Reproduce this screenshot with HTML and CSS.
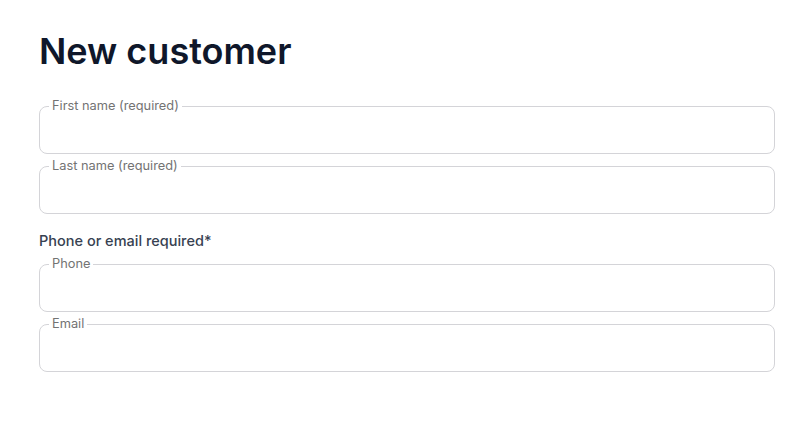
FILE: index.html
```html
<!DOCTYPE html>
<html lang="en">
<head>
<meta charset="utf-8">
<title>New customer</title>
<link rel="stylesheet" href="styles.css">
</head>
<body>
<main class="page">
  <h1 class="title">New customer</h1>
  <form class="form">
    <fieldset class="field">
      <legend class="field-label">First name (required)</legend>
      <input class="field-input" type="text">
    </fieldset>
    <fieldset class="field">
      <legend class="field-label">Last name (required)</legend>
      <input class="field-input" type="text">
    </fieldset>
    <p class="group-label">Phone or email required*</p>
    <fieldset class="field">
      <legend class="field-label">Phone</legend>
      <input class="field-input" type="tel">
    </fieldset>
    <fieldset class="field">
      <legend class="field-label">Email</legend>
      <input class="field-input" type="email">
    </fieldset>
  </form>
</main>
</body>
</html>
```
FILE: styles.css
```css
html, body {
  margin: 0;
  padding: 0;
  background: #ffffff;
}
body {
  font-family: Inter, "Liberation Sans", sans-serif;
}
.page {
  padding: 31px 37px 0 39px;
}
.title {
  margin: 0;
  font-size: 36px;
  line-height: 40px;
  font-weight: 600;
  color: #0f172a;
  letter-spacing: 0;
}
.form {
  margin-top: 27px;
  display: flex;
  flex-direction: column;
  gap: 4px;
}
.field {
  margin: 0;
  padding: 0 12px 4px;
  border: 1px solid #d4d4d8;
  border-radius: 8px;
  min-width: 0;
}
.field-label {
  padding: 0 3px;
  margin-left: -3px;
  font-size: 12.8px;
  line-height: 16px;
  color: #737373;
}
.field-input {
  display: block;
  width: 100%;
  box-sizing: border-box;
  height: 35px;
  border: 0;
  outline: none;
  background: transparent;
  font: inherit;
  font-size: 14px;
  padding: 0;
}
.group-label {
  margin: 13px 0 1px;
  font-size: 14.5px;
  line-height: 20px;
  font-weight: 500;
  color: #374151;
}
```
